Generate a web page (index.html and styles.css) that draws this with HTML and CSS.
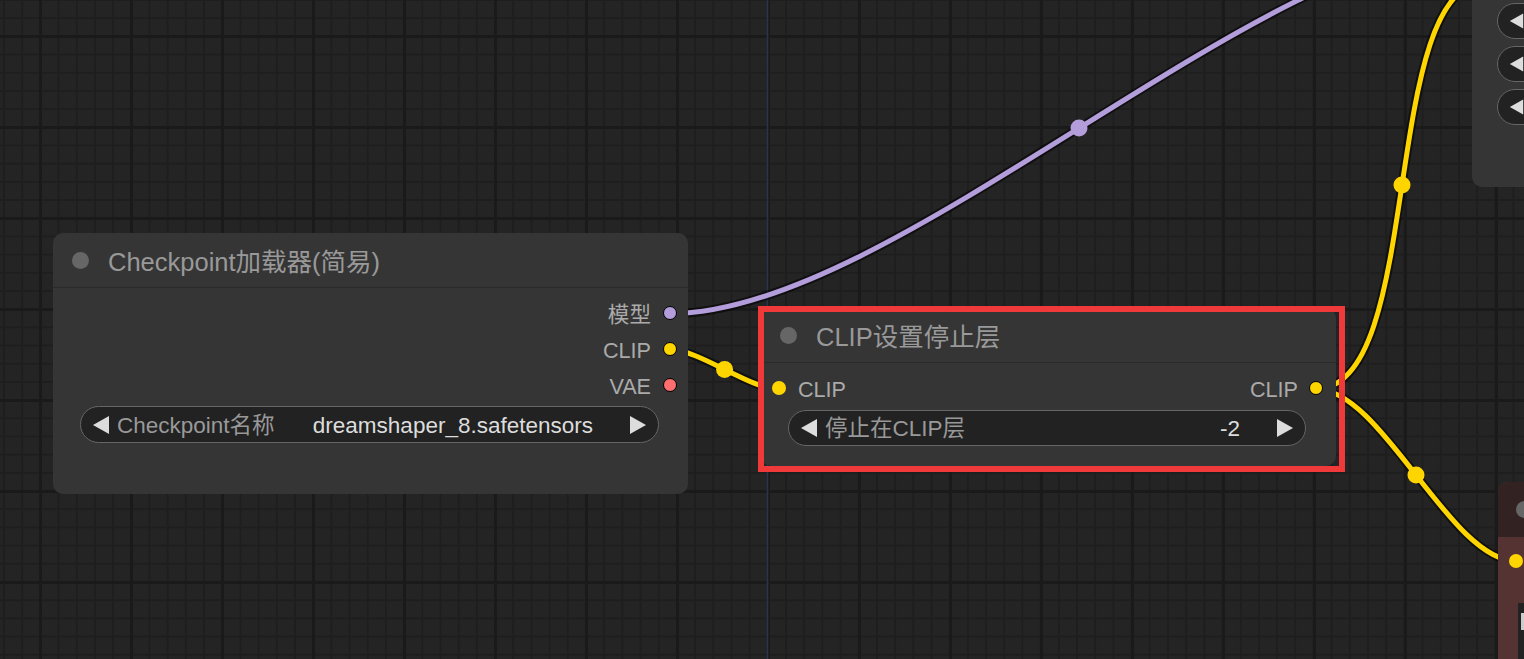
FILE: index.html
```html
<!DOCTYPE html>
<html lang="zh-CN">
<head>
<meta charset="utf-8">
<title>ComfyUI canvas</title>
<link rel="stylesheet" href="styles.css">
</head>
<body>
<div class="canvas">
  <svg class="links" width="1524" height="659" viewBox="0 0 1524 659">
    <line class="axis" x1="767.5" y1="0" x2="767.5" y2="659"/>
    <g class="link-shadow">
      <path d="M670 313.7 C894.6 313.7 1263.4 -57.7 1490 -57.7"/>
      <path d="M670 349.5 C699.1 349.5 750.2 389.3 779.3 389.3"/>
      <path d="M1316 389 C1426.7 389 1377.3 -19 1488 -19"/>
      <path d="M1316 389 C1382 389 1450 561 1516 561"/>
    </g>
    <path class="link link-model" d="M670 313.7 C894.6 313.7 1263.4 -57.7 1490 -57.7"/>
    <path class="link link-clip" d="M670 349.5 C699.1 349.5 750.2 389.3 779.3 389.3"/>
    <path class="link link-clip" d="M1316 389 C1426.7 389 1377.3 -19 1488 -19"/>
    <path class="link link-clip" d="M1316 389 C1382 389 1450 561 1516 561"/>
    <circle class="mid-model" cx="1079" cy="128" r="8.5"/>
    <circle class="mid-clip" cx="724.6" cy="369.4" r="8.5"/>
    <circle class="mid-clip" cx="1402" cy="185" r="8.5"/>
    <circle class="mid-clip" cx="1416" cy="475" r="8.5"/>
  </svg>

  <div class="node node-ckpt">
    <div class="node-title"><span class="title-dot"></span><span class="title-text">Checkpoint加载器(简易)</span></div>
    <div class="node-body">
      <div class="slot-row out"><span class="slot-label">模型</span><span class="dot dot-model"></span></div>
      <div class="slot-row out"><span class="slot-label">CLIP</span><span class="dot dot-clip"></span></div>
      <div class="slot-row out"><span class="slot-label">VAE</span><span class="dot dot-vae"></span></div>
      <div class="widget widget-ckpt">
        <svg class="w-arrow" viewBox="0 0 18 18"><polygon points="17,0 17,18 1,9"/></svg>
        <span class="w-label">Checkpoint名称</span>
        <span class="w-value">dreamshaper_8.safetensors</span>
        <svg class="w-arrow" viewBox="0 0 18 18"><polygon points="1,0 1,18 17,9"/></svg>
      </div>
    </div>
  </div>

  <div class="node node-clip">
    <div class="node-title"><span class="title-dot"></span><span class="title-text">CLIP设置停止层</span></div>
    <div class="node-body">
      <div class="slot-row both">
        <span class="slot-in"><span class="dot dot-clip in"></span><span class="slot-label">CLIP</span></span>
        <span class="slot-out"><span class="slot-label">CLIP</span><span class="dot dot-clip"></span></span>
      </div>
      <div class="widget widget-stop">
        <svg class="w-arrow" viewBox="0 0 18 18"><polygon points="17,0 17,18 1,9"/></svg>
        <span class="w-label">停止在CLIP层</span>
        <span class="w-value">-2</span>
        <svg class="w-arrow" viewBox="0 0 18 18"><polygon points="1,0 1,18 17,9"/></svg>
      </div>
    </div>
  </div>

  <div class="node node-tr">
    <div class="pill"><svg class="w-arrow" viewBox="0 0 18 18"><polygon points="17,0 17,18 1,9"/></svg></div>
    <div class="pill"><svg class="w-arrow" viewBox="0 0 18 18"><polygon points="17,0 17,18 1,9"/></svg></div>
    <div class="pill"><svg class="w-arrow" viewBox="0 0 18 18"><polygon points="17,0 17,18 1,9"/></svg></div>
  </div>

  <div class="node node-br">
    <div class="node-title"><span class="title-dot"></span></div>
    <div class="br-body">
      <div class="slot-row in-row"><span class="dot dot-clip in"></span></div>
      <div class="textbox"><span class="caret"></span></div>
    </div>
  </div>

  <div class="highlight"></div>
</div>
</body>
</html>
```

FILE: styles.css
```css
* { box-sizing: border-box; }

body {
  margin: 0;
  background: #232323;
  font-family: "Liberation Sans", "Noto Sans CJK SC", sans-serif;
}

.canvas {
  position: relative;
  width: 1524px;
  height: 659px;
  overflow: hidden;
  background-color: #242424;
  background-image:
    linear-gradient(90deg, #1a1a1a 0, #1a1a1a 3px, transparent 3px),
    linear-gradient(180deg, #1a1a1a 0, #1a1a1a 3px, transparent 3px),
    linear-gradient(90deg, #1e1e1e 0, #1e1e1e 2px, transparent 2px),
    linear-gradient(180deg, #1e1e1e 0, #1e1e1e 2px, transparent 2px);
  background-size: 91px 100%, 100% 91px, 18.2px 100%, 100% 18.2px;
  background-position: 39px 0, 0 35px, 3px 0, 0 -1px;
}

.links {
  position: absolute;
  left: 0;
  top: 0;
}

.axis { stroke: #2c3352; stroke-width: 1.5; }

.link-shadow path {
  fill: none;
  stroke: #000;
  stroke-opacity: 0.55;
  stroke-width: 9;
}

.link { fill: none; stroke-width: 5; }
.link-model { stroke: #b39ddb; }
.link-clip { stroke: #ffd500; }
.mid-model { fill: #b39ddb; }
.mid-clip { fill: #ffd500; }

.node {
  position: absolute;
  background: #353535;
  border-radius: 10px;
  display: flex;
  flex-direction: column;
}

.node-ckpt { left: 53px; top: 233px; width: 635px; height: 261px; }
.node-clip { left: 761px; top: 308px; width: 575px; height: 158px; }

.node-title {
  flex: none;
  height: 55px;
  display: flex;
  align-items: center;
  padding-left: 19px;
  border-bottom: 1.5px solid #2a2a2a;
  white-space: nowrap;
}

.title-dot {
  flex: none;
  width: 17px;
  height: 17px;
  border-radius: 50%;
  background: #666;
  margin-right: 19px;
}

.title-text {
  font-size: 25.5px;
  line-height: 1;
  color: #999;
  padding-top: 5px;
}

.node-body {
  display: flex;
  flex-direction: column;
  padding-top: 7px;
}

.slot-row {
  height: 36px;
  display: flex;
  align-items: center;
  font-size: 21.6px;
  color: #aaa;
  white-space: nowrap;
}

.slot-label { line-height: 1; padding-top: 3px; }

.slot-row.out {
  justify-content: flex-end;
  gap: 12px;
  padding-right: 11px;
}

.slot-row.both {
  justify-content: space-between;
  padding: 0 13px 0 11px;
}

.slot-in, .slot-out {
  display: flex;
  align-items: center;
  gap: 12px;
}

.slot-out { gap: 11px; }

.dot {
  flex: none;
  width: 14px;
  height: 14px;
  border-radius: 50%;
  border: 1.5px solid #000;
}

.dot.in { border: none; }
.dot-model { background: #b39ddb; }
.dot-clip { background: #ffd500; }
.dot-vae { background: #ff6e6e; }

.widget {
  height: 37px;
  border-radius: 18.5px;
  background: #222;
  border: 1.5px solid #666;
  display: flex;
  align-items: center;
  padding: 0 11px;
  font-size: 22.5px;
  white-space: nowrap;
}

.widget-ckpt { margin: 3px 29px 0 27px; }
.widget-stop { margin: 4px 30px 0 27px; height: 36px; }

.w-arrow {
  flex: none;
  width: 18px;
  height: 18px;
  fill: #ddd;
}

.w-label { color: #999; margin-left: 7px; line-height: 1; padding-top: 3px; }
.w-value { color: #ddd; margin-left: auto; margin-right: 36px; line-height: 1; padding-top: 3px; }

.node-tr {
  left: 1472px;
  top: -20px;
  width: 120px;
  height: 207px;
  padding: 22.7px 0 0 25px;
  gap: 7px;
}

.pill {
  flex: none;
  height: 36px;
  border-radius: 18px;
  background: #222;
  border: 1.5px solid #666;
  display: flex;
  align-items: center;
  padding-left: 11px;
}

.pill .w-arrow { width: 15px; height: 18px; }

.node-br {
  left: 1498px;
  top: 482px;
  width: 120px;
  height: 260px;
  background: #553333;
  overflow: hidden;
}

.node-br .node-title {
  background: #332222;
  border-bottom: none;
  padding-left: 18px;
  border-radius: 10px 10px 0 0;
}

.br-body {
  display: flex;
  flex-direction: column;
  padding-top: 6px;
}

.slot-row.in-row {
  padding-left: 11px;
}

.textbox {
  margin: 24px 0 0 20px;
  height: 140px;
  background: #222;
  padding: 10px 3px;
}

.caret {
  display: block;
  width: 3px;
  height: 17px;
  background: #ccc;
}

.highlight {
  position: absolute;
  left: 758px;
  top: 306px;
  width: 587px;
  height: 166px;
  border: 6px solid #f03a3a;
}
```
